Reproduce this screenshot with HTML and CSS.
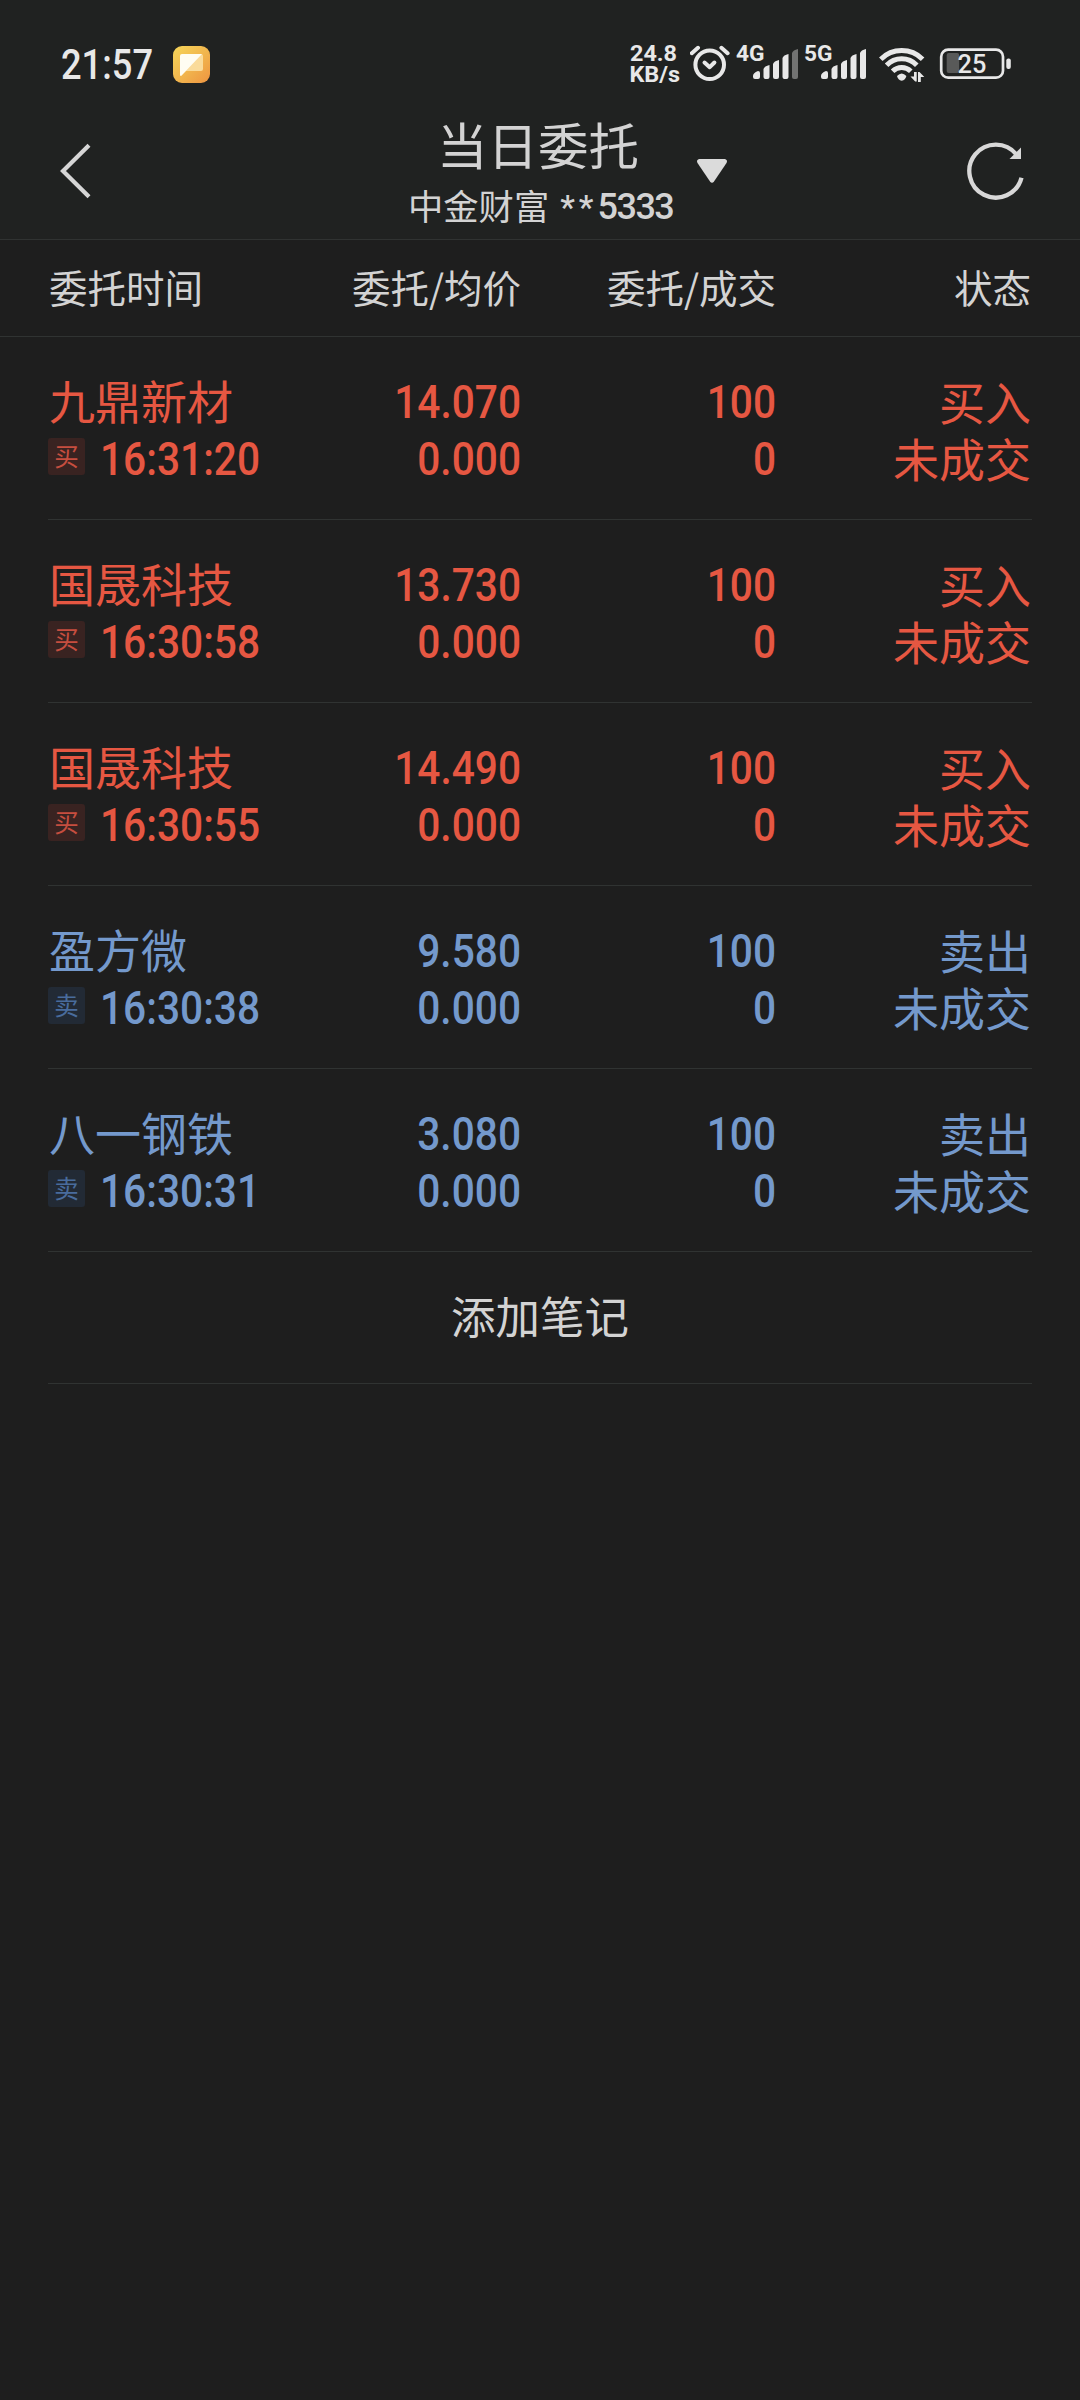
FILE: index.html
```html
<!DOCTYPE html>
<html lang="zh-CN">
<head>
<meta charset="utf-8">
<title>当日委托</title>
<link rel="stylesheet" href="styles.css">
</head>
<body>
<header class="top">
  <div class="status">
    <svg class="clock" width="105" height="60" viewBox="55 35 105 60"><text class="num" x="61" y="79" font-size="42" font-weight="500" textLength="92" lengthAdjust="spacingAndGlyphs">21:57</text></svg>
    <svg class="app" width="37" height="50" viewBox="173 40 37 50">
      <defs><linearGradient id="gold" x1="0" y1="0" x2="1" y2="1"><stop offset="0" stop-color="#f6d659"/><stop offset=".55" stop-color="#f1b44d"/><stop offset="1" stop-color="#ee9440"/></linearGradient></defs>
      <rect x="173" y="46" width="37" height="37" rx="9" fill="url(#gold)"/>
      <path d="M182 54h19q2 0 2 2v13q0 2-2 2h-15l-5 5z" fill="#fadb9a"/>
      <path d="M182 54h20l-21 22q-1 0-1-1V56q0-2 2-2z" fill="#fffdf2"/>
    </svg>
    <svg class="net" width="52" height="50" viewBox="630 40 52 50">
      <text class="num" x="630" y="61" font-size="22.5" font-weight="700" textLength="47" lengthAdjust="spacingAndGlyphs">24.8</text>
      <text class="num" x="629.5" y="81.5" font-size="22" font-weight="700" textLength="50.5" lengthAdjust="spacingAndGlyphs">KB/s</text>
    </svg>
    <svg class="alarm" width="40" height="50" viewBox="690 40 40 50" fill="none" stroke="#e8e8e8" stroke-width="4" stroke-linecap="round" stroke-linejoin="round">
      <circle cx="709.7" cy="64.7" r="14.3"/><path d="M704.5 62.5l5.2 4.7 4.7-4.7"/><path d="M691.8 53.2l6.2-5.4M721.4 47.8l6.2 5.4"/>
    </svg>
    <svg class="cell" width="64" height="50" viewBox="735 40 64 50">
      <text class="num" x="736" y="61" font-size="21.5" font-weight="700" textLength="28.5" lengthAdjust="spacingAndGlyphs">4G</text>
      <path d="M753 76q0-3 5-5q2 0 2 2v4q0 2-2 2h-3q-2 0-2-2zM763.5 69q1-3 6-4v12q0 2-2 2h-2q-2 0-2-2zM773 64q1-3 6-4v17q0 2-2 2h-2q-2 0-2-2zM782.5 58q1-3 6-4v23q0 2-2 2h-2q-2 0-2-2z"/>
      <path d="M792 53q1-3 6-4v28q0 2-2 2h-2q-2 0-2-2z" fill="#727372"/>
    </svg>
    <svg class="cell2" width="64" height="50" viewBox="803 40 64 50">
      <text class="num" x="804" y="61" font-size="21.5" font-weight="700" textLength="28.5" lengthAdjust="spacingAndGlyphs">5G</text>
      <path d="M821 76q0-3 5-5q2 0 2 2v4q0 2-2 2h-3q-2 0-2-2zM831.5 69q1-3 6-4v12q0 2-2 2h-2q-2 0-2-2zM841 64q1-3 6-4v17q0 2-2 2h-2q-2 0-2-2zM850.5 58q1-3 6-4v23q0 2-2 2h-2q-2 0-2-2zM860 53q1-3 6-4v28q0 2-2 2h-2q-2 0-2-2z"/>
    </svg>
    <svg class="wifi" width="48" height="50" viewBox="879 40 48 50">
      <g fill="none" stroke="#e8e8e8" stroke-width="5"><path d="M880.8 59.2a29.6 29.6 0 0 1 41.8 0M886.6 65.2a21 21 0 0 1 30.2 0M892.6 71.2a12.8 12.8 0 0 1 18.2 0"/></g>
      <path d="M897 76q4.700-5 9.400 0q-1 4-4.700 4.700q-3.700-.7-4.700-4.700z"/>
      <path d="M914 72h2.700v9.500h-1.500l-4.700-5h3.500zM918 82V72h1.500l4.800 5h-3.500v5z"/>
    </svg>
    <svg class="battery" width="73" height="50" viewBox="939 40 73 50">
      <rect x="941.2" y="49.700" width="61.800" height="28" rx="7" fill="none" stroke="#e8e8e8" stroke-width="2.700"/>
      <rect x="946.700" y="53" width="12.500" height="20" rx="2" fill="#595a59"/>
      <rect x="1006.300" y="58.500" width="4.500" height="10.500" rx="2"/>
      <text class="num" x="957.5" y="73.200" font-size="25.500" font-weight="500" textLength="28.800" lengthAdjust="spacingAndGlyphs">25</text>
    </svg>
  </div>
  <nav class="bar">
    <svg class="back" width="32" height="56" viewBox="59 143 32 56" fill="none" stroke="#d6d6d6" stroke-width="4.200"><path d="M89 145.300L63 171l26 25.700"/></svg>
    <div class="heading">
      <h1>当日委托</h1>
      <p>中金财富 <span class="star">**</span><span class="acct">5333</span></p>
    </div>
    <svg class="drop" width="32" height="26" viewBox="696 158 32 26"><path d="M699 159h26q3 1 1.500 4l-12.500 18.500q-2 2.500-4 0L697.500 163q-1.500-3 1.500-4z" fill="#dbdbdb"/></svg>
    <svg class="refresh" width="62" height="62" viewBox="965 140 62 62"><path d="M1021.500 177.700A26.500 26.500 0 1 1 1016.500 154.500" fill="none" stroke="#d8d8d8" stroke-width="4.300"/><path d="M1021 147.500V159h-11.500z" fill="#d8d8d8"/></svg>
  </nav>
</header>
<main>
  <div class="cols head"><span>委托时间</span><span>委托/均价</span><span>委托/成交</span><span>状态</span></div>
  <section class="list">
    <article class="cols row buy">
      <div><b>九鼎新材</b><div class="when"><i>买</i><em>16:31:20</em></div></div>
      <div><em>14.070</em><em>0.000</em></div><div><em>100</em><em>0</em></div><div class="state"><b>买入</b><b>未成交</b></div>
    </article>
    <article class="cols row buy">
      <div><b>国晟科技</b><div class="when"><i>买</i><em>16:30:58</em></div></div>
      <div><em>13.730</em><em>0.000</em></div><div><em>100</em><em>0</em></div><div class="state"><b>买入</b><b>未成交</b></div>
    </article>
    <article class="cols row buy">
      <div><b>国晟科技</b><div class="when"><i>买</i><em>16:30:55</em></div></div>
      <div><em>14.490</em><em>0.000</em></div><div><em>100</em><em>0</em></div><div class="state"><b>买入</b><b>未成交</b></div>
    </article>
    <article class="cols row sell">
      <div><b>盈方微</b><div class="when"><i>卖</i><em>16:30:38</em></div></div>
      <div><em>9.580</em><em>0.000</em></div><div><em>100</em><em>0</em></div><div class="state"><b>卖出</b><b>未成交</b></div>
    </article>
    <article class="cols row sell">
      <div><b>八一钢铁</b><div class="when"><i>卖</i><em>16:30:31</em></div></div>
      <div><em>3.080</em><em>0.000</em></div><div><em>100</em><em>0</em></div><div class="state"><b>卖出</b><b>未成交</b></div>
    </article>
    <div class="note">添加笔记</div>
  </section>
</main>
</body>
</html>
```
FILE: styles.css
```css
* { box-sizing: border-box; margin: 0; padding: 0; }
body { width: 1080px; min-height: 2400px; background: #1e1e1e; color: #d3d3d3; font-family: "Noto Sans CJK SC", sans-serif; }
svg { display: block; flex: none; }
.num, em { font-family: Roboto, sans-serif; }
.top { height: 240px; background: #202221; border-bottom: 1px solid #303332; }
.status { display: flex; height: 110px; padding: 40px 0 0 55px; fill: #e8e8e8; }
.clock { margin-top: -5px; }
.app { margin-left: 13px; }
.net { margin-left: 420px; }
.alarm { margin-left: 8px; }
.cell { margin-left: 5px; }
.cell2 { margin-left: 4px; }
.wifi { margin-left: 12px; }
.battery { margin-left: 12px; }
.bar { display: flex; height: 129px; padding-left: 59px; }
.back { margin-top: 33px; }
.heading { width: 318px; margin-left: 291px; padding-left: 26px; white-space: nowrap; }
.bar h1 { margin: -2px 0 0 29px; font-size: 50.5px; line-height: 70px; font-weight: 400; }
.bar p { display: flex; font-size: 35.3px; line-height: 40px; padding-top: 7px; }
.star { margin: 3px 0 0 11px; font: 500 33px/40px Roboto, sans-serif; letter-spacing: 4px; }
.acct { margin-top: 2px; font: 500 36px/40px Roboto, sans-serif; letter-spacing: -1.5px; }
.drop { margin: 48px 0 0 -4px; }
.refresh { margin: 30px 0 0 237px; }
.cols { display: grid; grid-template-columns: 222px 250px 255px 255px; padding-left: 49px; }
.cols > :not(:first-child) { text-align: right; }
.head { height: 97px; border-bottom: 1px solid #303332; font-size: 38.5px; line-height: 93px; }
.list { padding: 0 48px; }
.row { margin: 0; padding: 36px 0 0 1px; height: 183px; border-bottom: 1px solid #303332; }
.row b, .row em { display: block; height: 57px; line-height: 57px; font-style: normal; white-space: nowrap; }
.row b { font-size: 46px; font-weight: 400; line-height: 53px; }
.row em { font-size: 47px; font-weight: 500; transform: scaleX(.865); transform-origin: right; }
.row .state { padding-top: 1px; }
.when { display: flex; height: 57px; margin-left: -1px; }
.when i { flex: none; width: 37px; height: 37px; margin: 8px 15px 0 0; border-radius: 3px; font-size: 24.5px; line-height: 36px; text-align: center; font-style: normal; }
.row .when em { transform-origin: left; }
.buy { color: #e65742; }
.sell { color: #7499cc; }
.buy i { background: #392321; color: #c64e3f; }
.sell i { background: #222a35; color: #496c9d; }
.note { height: 132px; border-bottom: 1px solid #303332; text-align: center; font-size: 44.5px; line-height: 126px; }
```
